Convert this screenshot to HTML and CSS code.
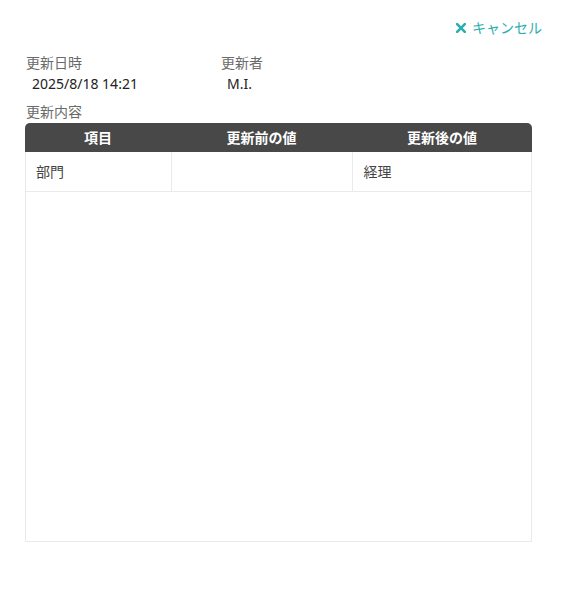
FILE: index.html
```html
<!DOCTYPE html>
<html lang="ja">
<head>
<meta charset="utf-8">
<link rel="stylesheet" href="styles.css">
</head>
<body>
<div class="page">
  <div class="toolbar">
    <a class="cancel" href="#">
      <svg class="cancel-icon" width="10" height="10" viewBox="0 0 10 10"><path d="M1.2 1.2 L8.8 8.8 M8.8 1.2 L1.2 8.8" stroke="currentColor" stroke-width="2.6" stroke-linecap="square"/></svg>
      <span>キャンセル</span>
    </a>
  </div>
  <div class="info">
    <div class="field">
      <div class="label">更新日時</div>
      <div class="value">2025/8/18 14:21</div>
    </div>
    <div class="field">
      <div class="label">更新者</div>
      <div class="value">M.I.</div>
    </div>
  </div>
  <div class="label section-label">更新内容</div>
  <div class="table-box">
    <table class="changes">
      <colgroup><col class="c1"><col class="c2"><col class="c3"></colgroup>
      <thead>
        <tr><th>項目</th><th>更新前の値</th><th>更新後の値</th></tr>
      </thead>
      <tbody>
        <tr><td>部門</td><td></td><td>経理</td></tr>
      </tbody>
    </table>
  </div>
</div>
</body>
</html>
```

FILE: styles.css
```css
html, body {
  margin: 0;
  padding: 0;
  background: #fff;
}
body {
  font-family: "Noto Sans", "Noto Sans CJK JP", sans-serif;
  font-size: 14px;
  line-height: 20px;
  color: #333;
}
.page {
  padding: 18px 35px 0 25px;
}
.toolbar {
  display: flex;
  justify-content: flex-end;
  margin-right: -10px;
}
.cancel {
  display: flex;
  align-items: center;
  gap: 6px;
  color: #2aaeb0;
  text-decoration: none;
}
.cancel-icon {
  display: block;
}
.info {
  display: grid;
  grid-template-columns: 195px 1fr;
  margin-top: 15px;
}
.label {
  color: #6b6b6b;
  padding-left: 1px;
}
.value {
  color: #222;
  padding-left: 7px;
  margin-top: 1px;
}
.section-label {
  margin-top: 8px;
}
.table-box {
  margin-top: 1px;
  height: 419px;
  border: 1px solid #eaeaea;
  border-top: none;
  border-radius: 5px 5px 0 0;
  box-sizing: border-box;
}
.changes {
  width: calc(100% + 2px);
  margin-left: -1px;
  border-collapse: collapse;
  table-layout: fixed;
}
.c1 { width: 146px; }
.c2 { width: 181px; }
.c3 { width: auto; }
.changes th {
  background: #484848;
  color: #fff;
  font-weight: 700;
  height: 29px;
  padding: 0;
  text-align: center;
}
.changes thead th:first-child { border-top-left-radius: 5px; }
.changes thead th:last-child { border-top-right-radius: 5px; }
.changes td {
  height: 39px;
  padding: 0 10px 0 11px;
  border-bottom: 1px solid #eaeaea;
  border-left: 1px solid #eaeaea;
  color: #444;
}
.changes td:first-child { border-left: none; }
```
